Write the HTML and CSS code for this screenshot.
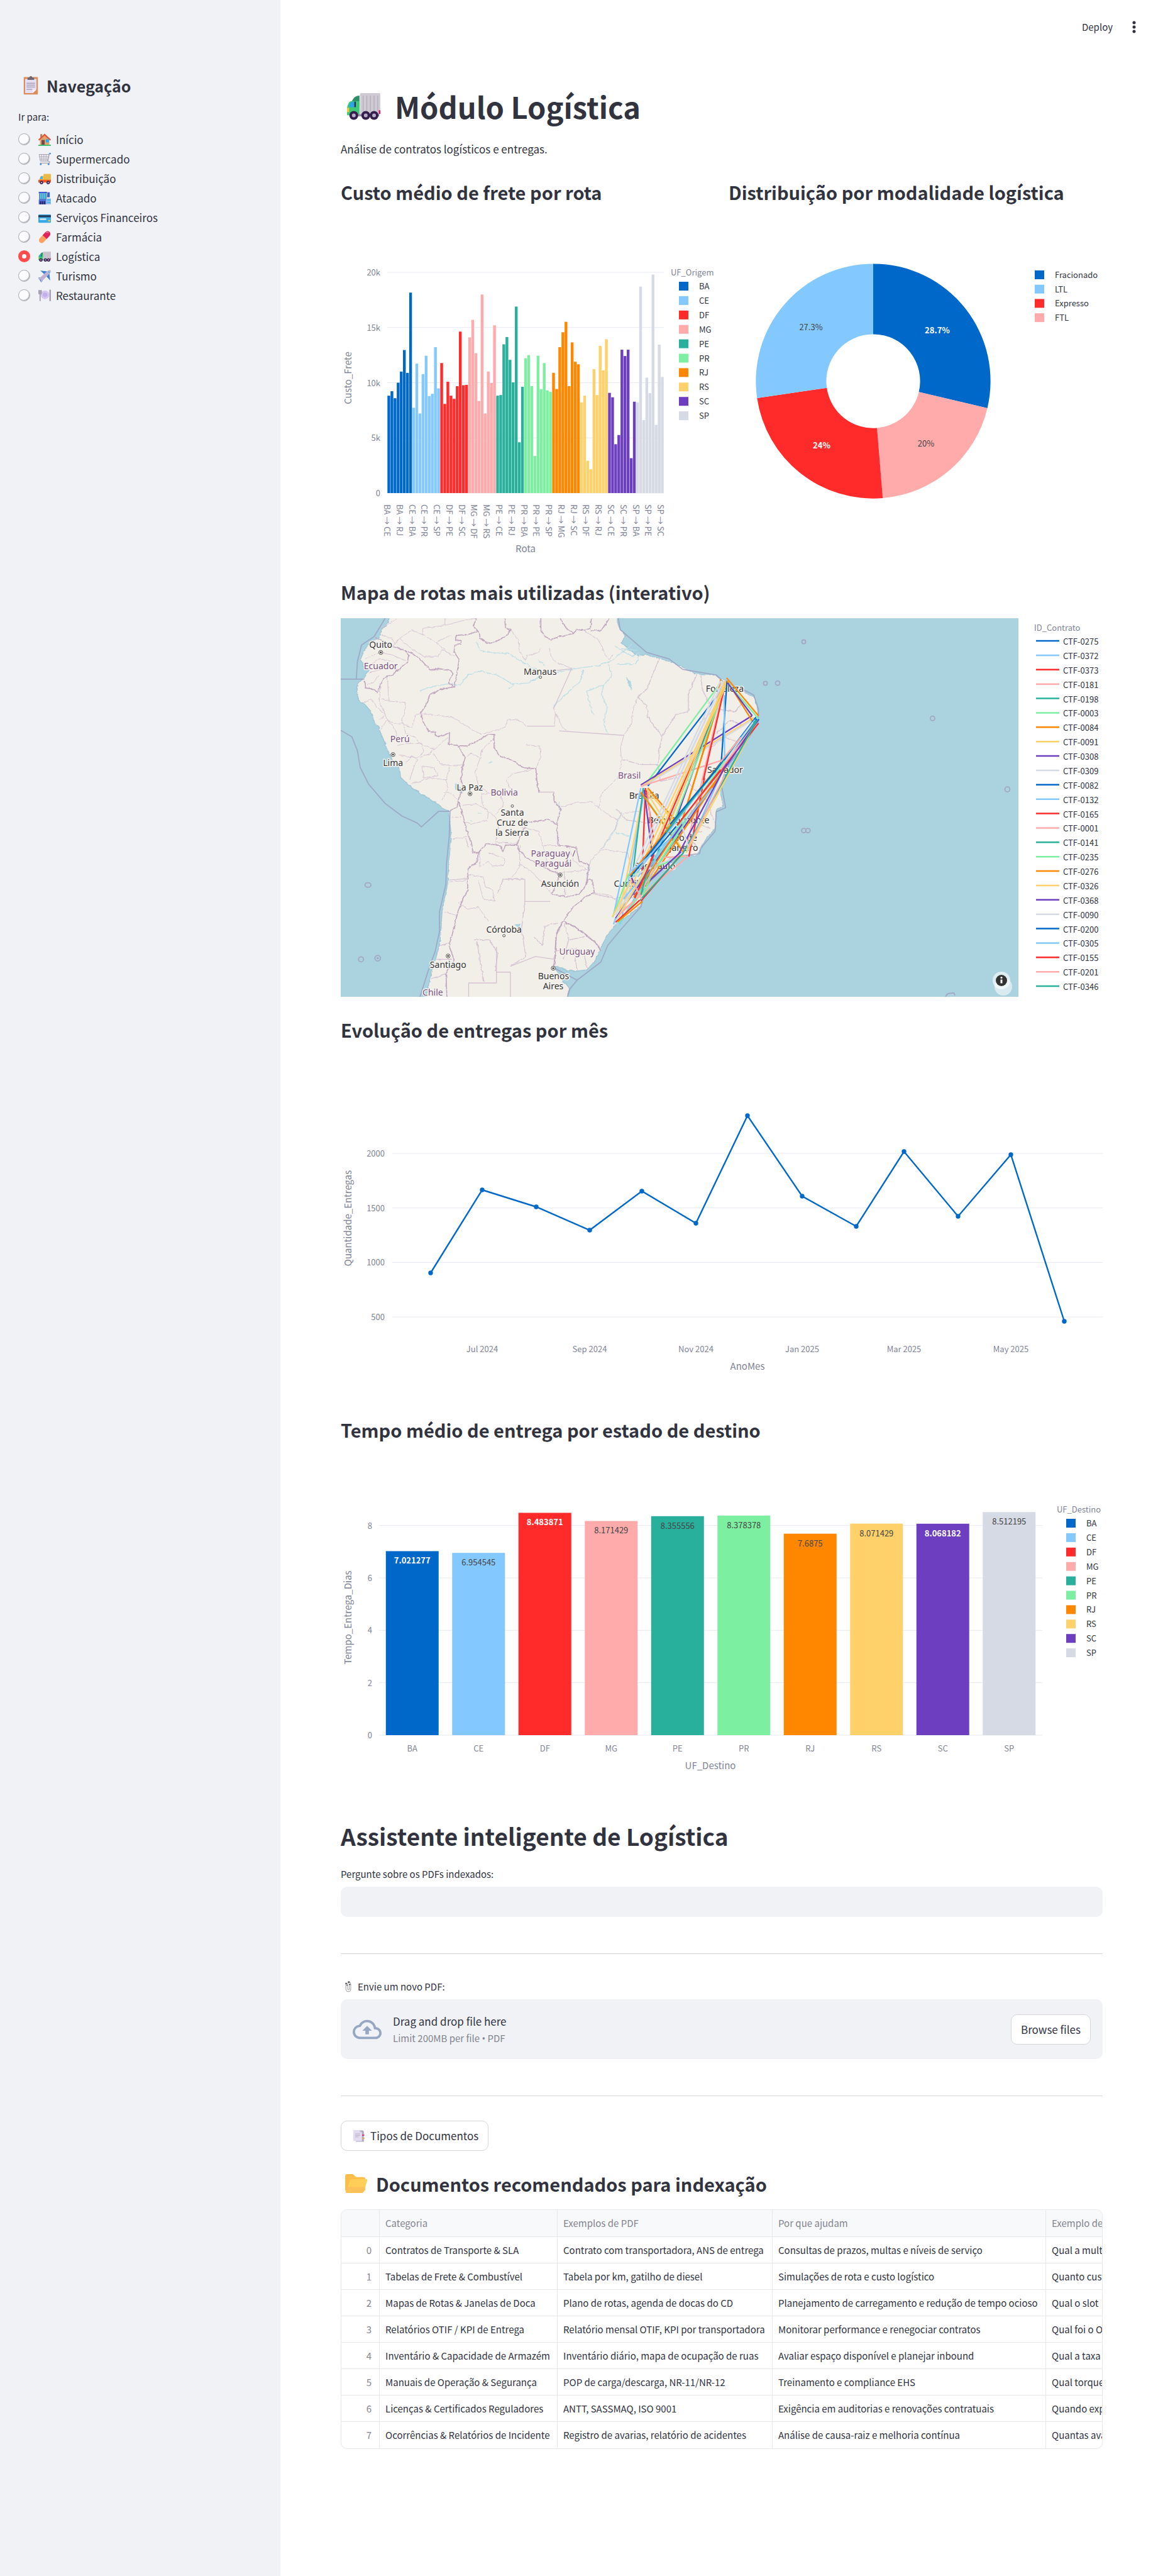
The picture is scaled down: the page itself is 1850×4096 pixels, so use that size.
FILE: index.html
```html
<!DOCTYPE html>
<html lang="pt-BR">
<head>
<meta charset="utf-8">
<title>Módulo Logística</title>
<meta name="viewport" content="width=device-width, initial-scale=1">
<link rel="stylesheet" href="styles.css">
</head>
<body>
<svg class="sprite" aria-hidden="true">
  <symbol id="i-clipboard" viewBox="0 0 32 40"><rect x="1" y="2" width="30" height="37" rx="1" fill="#d98f5c"/><path d="M4 6h24v22l-8 8H4z" fill="#e6def3"/><path d="M20 36v-7h8z" fill="#f7f3fd"/><path d="M9 8V5a2 2 0 0 1 2-2h2a3 3 0 0 1 6 0h2a2 2 0 0 1 2 2v3z" fill="#6f6777"/><path d="M7 15h18M7 19h18M7 23h18M7 28h12" stroke="#8d80a3" stroke-width="1.4"/></symbol>
  <symbol id="i-house" viewBox="0 0 32 32"><path d="M5 2h5v10H5z" fill="#b5825b"/><path d="M4 15 16 4l12 11v15H4z" fill="#dba46c"/><path d="M1 17 16 3l15 14" fill="none" stroke="#e8503a" stroke-width="3.4"/><rect x="8" y="17" width="8" height="13" fill="#7a4b45"/><rect x="19" y="15" width="8" height="8" fill="#2fa9ec"/><rect y="29" width="32" height="3" fill="#3fbf72"/></symbol>
  <symbol id="i-cart" viewBox="0 0 32 32"><path d="M27 2h5" stroke="#3f87e0" stroke-width="3"/><path d="M28 2 24 21l5 2-1 3H4" fill="none" stroke="#aaa4b5" stroke-width="2"/><path d="M2 4h25l-4 17H5z" fill="#eceaf1" stroke="#a9a3b3" stroke-width="1.6"/><path d="M8 4l1 17M14 4v17M20 4l-1 17M2 10h23M4 16h20" stroke="#a9a3b3" stroke-width="1.3"/><circle cx="6" cy="29" r="2.2" fill="#3f87e0"/><circle cx="26" cy="29" r="2.2" fill="#3f87e0"/></symbol>
  <symbol id="i-truck" viewBox="0 0 32 32"><rect x="13" y="4" width="19" height="17" rx="2" fill="#e9ba48"/><path d="M2 20 5 11q1-2 4-2h5v14H1z" fill="#fdb83b"/><path d="M4 17l2-6q1-1 3-1h2v7z" fill="#36b5ee"/><path d="M0 19h32v7H0z" fill="#f6562b"/><circle cx="8" cy="26" r="4.3" fill="#3a2450"/><circle cx="25" cy="26" r="4.3" fill="#3a2450"/><circle cx="8" cy="26" r="1.8" fill="#cbbfe0"/><circle cx="25" cy="26" r="1.8" fill="#cbbfe0"/></symbol>
  <symbol id="i-store" viewBox="0 0 32 32"><path d="M1 0h21v4H1z" fill="#3b5fd0"/><path d="M2 4h19v17H2z" fill="#5a78b0"/><path d="M5 4h3v14H5zM10 4h3v14h-3zM15 4h3v14h-3z" fill="#49dcf2"/><path d="M23 1h6v13h-7z" fill="#2f62d4"/><path d="M20 17h12v15H20z" fill="#a9bce4"/><path d="M22 18h9v5h-9zM22 25h9v4h-9z" fill="#49b8f2"/><path d="M1 20h19v12H1z" fill="#4b6ee0"/><path d="M4 24h3v8H4zM9 24h3v8H9zM14 24h3v8h-3z" fill="#2c1c50"/></symbol>
  <symbol id="i-card" viewBox="0 0 32 32"><rect y="8" width="32" height="21" rx="2" fill="#39a9e8"/><path d="M0 10h32v5H0z" fill="#263b5c"/><path d="M4 18h16v4H4z" fill="#d6e9f7"/><rect x="25" y="22" width="5" height="4" fill="#f4c63e"/></symbol>
  <symbol id="i-pill" viewBox="0 0 32 32"><g transform="rotate(-47 16 16)"><rect x="-2" y="9" width="36" height="14" rx="7" fill="#fca062"/><path d="M16 9h11a7 7 0 0 1 0 14H16z" fill="#e0245e"/><path d="M27 11q4 1 4 5" fill="none" stroke="#ff8fb0" stroke-width="2"/></g></symbol>
  <symbol id="i-lorry" viewBox="0 0 64 52"><g transform="scale(1 1.180)"><path d="M10 12q4-8 14-8v20H6z" fill="#2f8f68"/><path d="M0 36V24q2-9 7-11h17v23z" fill="#3fc877"/><path d="M4 22q1-7 6-8h4v9H4z" fill="#2aa6e6"/><path d="M14 14h3v9h-3z" fill="#20344f"/><path d="M0 24h4v7H0z" fill="#f5c93c"/><rect x="25" y="0" width="39" height="34" rx="2" fill="#cfcad4"/><path d="M31 4v26M38 4v26M45 4v26M52 4v26M59 4v26" stroke="#b4adbb" stroke-width="1.6"/><path d="M12 34h50v4H12z" fill="#9a90a6"/><path d="M61 28h3v6h-3z" fill="#e0115f"/></g><g fill="#35204d"><circle cx="13" cy="43" r="8.500"/><circle cx="36" cy="43" r="8.500"/><circle cx="52" cy="43" r="8.500"/></g><g fill="#b9acc9"><circle cx="13" cy="43" r="3.600"/><circle cx="36" cy="43" r="3.600"/><circle cx="52" cy="43" r="3.600"/></g></symbol>
  <symbol id="i-plane" viewBox="0 0 32 32"><path d="M5 2 22 4l-4 10zM30 27 28 9l-10 5z" fill="#3f80d8"/><path d="M0 20l8-1 3 9-4 4zM16 24l-3 7" fill="#3f80d8"/><path d="M31 1q2 3-2 8L11 27q-2 3-4 4l-1-6-6-2q2-3 5-4L23 3q5-3 8-2z" fill="#bdb2d2"/><path d="M25 4l4 4" stroke="#49b8f2" stroke-width="2"/></symbol>
  <symbol id="i-plate" viewBox="0 0 32 32"><circle cx="17" cy="14" r="11" fill="#d3c4f0"/><circle cx="17" cy="14" r="7" fill="#c3b0ea" stroke="#e4daf8"/><path d="M0 2v8q0 3 3 3v17h3V13q3 0 3-3V2" fill="#a9a0b4"/><path d="M28 1h4v29h-4z" fill="#a9a0b4"/></symbol>
  <symbol id="i-clips" viewBox="0 0 20 32"><path d="M3 9v12q0 9 7 9t7-9V9q0-6-4-6T8 9v12q0 4 2.500 4T13 21V11" fill="none" stroke="#8d8d92" stroke-width="1.500"/><path d="M2 5h4v4H2zM9 1h5v4H9zM12 8h4v3h-4zM5 10h3v3H5z" fill="#3e3e44"/></symbol>
  <symbol id="i-tabs" viewBox="0 0 30 32"><path d="M7 2h17q4 0 4 4v26H7z" fill="#b3a7c4"/><path d="M23 13h6v3h-6z" fill="#e0246a"/><path d="M25 21h5v3h-5z" fill="#f0b13a"/><path d="M0 1h17l6 6v23H0z" fill="#e3dcf0"/><path d="M17 1v6h6z" fill="#cabfdb"/><path d="M5 11h13M5 15h13M5 19h9" stroke="#b3a7c4" stroke-width="1.500"/></symbol>
  <symbol id="i-folder" viewBox="0 0 36 31"><path d="M0 3q0-3 3-3h9q1 0 2 1l4 4h12q3 0 3 3v19H0z" fill="#ffbd4a"/><path d="M8 11q1-3 4-3h22q3 0 2 3l-5 17q-1 3-4 3H3q-3 0-2-3z" fill="#ffcf57"/><path d="M3 31q-3 0-2-3l2-7h29l-1 7q-1 3-4 3z" fill="#ffb85c" opacity=".6"/></symbol>
  <symbol id="i-cloud" viewBox="0 0 24 24"><path fill="#97a6c3" d="M19.350 10.040A7.490 7.490 0 0 0 12 4C9.110 4 6.600 5.640 5.350 8.040A5.994 5.994 0 0 0 0 14c0 3.310 2.690 6 6 6h13c2.760 0 5-2.240 5-5 0-2.640-2.050-4.780-4.650-4.960zM19 18H6c-2.210 0-4-1.790-4-4 0-2.050 1.530-3.760 3.560-3.970l1.070-.11.500-.95A5.469 5.469 0 0 1 12 6c2.620 0 4.880 1.860 5.390 4.430l.3 1.500 1.530.11A2.980 2.980 0 0 1 22 15c0 1.650-1.350 3-3 3zM8 13h2.550v3h2.900v-3H16l-4-4z"/></symbol>
</svg>

<div class="app">
  <aside class="sidebar">
    <h2 class="sidebar-title"><svg class="icon icon-title"><use href="#i-clipboard"/></svg>Navegação</h2>
    <fieldset class="nav">
      <legend>Ir para:</legend>
      <label><input type="radio" name="page"><svg class="icon icon-nav"><use href="#i-house"/></svg>Início</label>
      <label><input type="radio" name="page"><svg class="icon icon-nav"><use href="#i-cart"/></svg>Supermercado</label>
      <label><input type="radio" name="page"><svg class="icon icon-nav"><use href="#i-truck"/></svg>Distribuição</label>
      <label><input type="radio" name="page"><svg class="icon icon-nav"><use href="#i-store"/></svg>Atacado</label>
      <label><input type="radio" name="page"><svg class="icon icon-nav"><use href="#i-card"/></svg>Serviços Financeiros</label>
      <label><input type="radio" name="page"><svg class="icon icon-nav"><use href="#i-pill"/></svg>Farmácia</label>
      <label><input type="radio" name="page" checked><svg class="icon icon-nav"><use href="#i-lorry"/></svg>Logística</label>
      <label><input type="radio" name="page"><svg class="icon icon-nav"><use href="#i-plane"/></svg>Turismo</label>
      <label><input type="radio" name="page"><svg class="icon icon-nav"><use href="#i-plate"/></svg>Restaurante</label>
    </fieldset>
  </aside>

  <div class="page">
    <header class="toolbar">
      <button type="button" class="deploy">Deploy</button>
      <button type="button" class="more" aria-label="Menu"><svg viewBox="0 0 6 20" width="6" height="20"><circle cx="3" cy="3" r="2.500"/><circle cx="3" cy="10" r="2.500"/><circle cx="3" cy="17" r="2.500"/></svg></button>
    </header>

    <main class="content">
      <h1><svg class="icon icon-lorry"><use href="#i-lorry"/></svg>Módulo Logística</h1>
      <p class="lead">Análise de contratos logísticos e entregas.</p>

      <div class="columns">
        <section>
          <h3>Custo médio de frete por rota</h3>
          <svg class="chart" id="cost-chart" viewBox="0 0 595 560" role="img" aria-label="Custo de frete por rota"></svg>
        </section>
        <section>
          <h3>Distribuição por modalidade logística</h3>
          <svg class="chart" id="mode-chart" viewBox="0 0 595 560" role="img" aria-label="Modalidade logística"></svg>
        </section>
      </div>

      <section class="map-section">
        <h3>Mapa de rotas mais utilizadas (interativo)</h3>
        <svg class="chart" id="route-map" viewBox="0 0 1212 602" role="img" aria-label="Mapa de rotas">
          <defs>
            <clipPath id="map-clip"><rect width="1078" height="602"/></clipPath>
            <filter id="rough" x="0" y="0" width="100%" height="100%"><feTurbulence type="fractalNoise" baseFrequency=".07" numOctaves="3" seed="4"/><feDisplacementMap in="SourceGraphic" scale="9" xChannelSelector="R" yChannelSelector="G"/></filter>
          </defs>
          <g clip-path="url(#map-clip)">
            <rect width="1078" height="602" fill="#aad3df"/>
            <g transform="scale(.4424) translate(-50 -174)">
              <g filter="url(#rough)">
                <path class="land" d="M235 150 225 174 210 205 195 215 188 245 155 262 145 275 130 300 122 320 130 345 150 360 135 385 112 410 108 440 115 470 135 482 155 505 168 540 185 565 195 590 210 625 225 660 238 690 262 715 265 745 300 780 350 812 395 838 415 855 437 868 445 930 447 970 438 1050 434 1130 415 1220 410 1300 405 1350 385 1420 370 1470 355 1560 865 1560 870 1500 850 1480 845 1465 815 1430 830 1425 860 1440 900 1442 935 1438 965 1405 985 1360 1010 1310 1040 1275 1067 1255 1089 1240 1129 1206 1136 1162 1147 1125 1198 1074 1234 1038 1292 1027 1328 1027 1343 1005 1365 965 1397 929 1401 864 1426 849 1416 806 1426 740 1445 697 1488 639 1539 566 1552 523 1546 486 1532 454 1488 432 1452 425 1430 396 1387 376 1328 374 1292 356 1270 345 1220 325 1180 315 1150 305 1120 310 1085 285 1060 262 1075 235 1055 215 1045 190 1045 150Z"/>
                <path class="water" d="M1000 1370 975 1385 985 1355ZM1060 1262 1035 1325 1020 1335 1040 1290 1042 1265ZM458 770 475 768 480 785 497 795 485 802 465 790ZM675 1275 697 1272 690 1290ZM1078 385 1092 402 1098 430 1086 418Z"/>
                <g transform="translate(43.600 174.200) scale(.726)">
                  <path class="river" d="M680 115 700 160 760 170 840 175 910 215 940 235 1000 262 1080 270 1140 255 1200 245 1280 235 1340 215 1400 170 1450 130M600 330 640 280 700 262 780 280 860 325 940 320 1000 285M840 350 870 325M1210 255 1195 310 1130 370 1060 440M1335 225 1350 290 1310 330 1300 380 1330 440 1310 520 1330 570M1310 330 1230 360 1240 420 1260 480M1440 320 1450 360M400 360 450 340 540 325 600 330M990 210 1020 235M1400 150 1480 160M1370 140 1450 190 1490 170M1380 230 1470 225 1490 180M1240 1230 1225 1320M1300 1140 1350 1080 1375 1030 1400 960M1090 910 1095 950M740 715 760 712M690 965 705 965M650 1000 660 1005M1370 1060 1440 1080"/>
                  <path class="state" d="M415 470 570 492 640 540 705 575 760 560 820 540 840 500 890 505 930 535M1060 440 1075 475 1065 535M1075 475 1090 500 1105 540 1135 560M930 628 995 632 1000 690 975 745M1410 580 1395 640 1400 715 1380 790 1300 870 1285 935 1330 970 1380 1000 1370 1040 1300 1140 1250 1200 1238 1225M1285 940 1260 910 1180 910 1100 935M1380 1000 1400 970 1500 950M1300 1145 1430 1160 1450 1250 1440 1340M1265 1360 1340 1370 1440 1440M855 65 890 110 895 160 925 210 930 185 985 170 1000 147M1042 147 1050 190 1080 220 1155 248M1215 60 1290 110 1310 165 1335 205 1360 180M1410 580 1450 520 1455 460 1480 390 1500 370M768 595 710 650 700 690 675 760 690 830 745 868 800 870 815 920 780 970M700 690 650 670 625 690M975 745 860 770 830 800 850 845M745 868 705 870 710 920 740 960 735 1000 660 1018 630 1010M615 925 680 920 720 940 775 985 790 1030 775 1110 880 1115M905 1035 990 1055 1010 1125 1085 1125M1010 1130 1030 1200 1095 1270M1115 1240 1120 1370M1090 1260 1200 1250 1225 1240M1060 1330 1190 1330M1140 1130 1160 1200 1238 1250M895 1120 895 1230 850 1290M895 1215 960 1260 1055 1365M695 1160 700 1230 740 1200 760 1230 820 1220 820 1190 740 1160M640 1270 715 1280 725 1330 760 1340 770 1400 715 1390 690 1300M560 985 605 985M565 1095 635 1080M545 1305 610 1300 640 1290M590 1410 640 1440 690 1430 740 1500M510 1450 580 1470M265 140 300 100 360 60 415 80 480 120 560 80M415 85 415 50 525 35 525 0M525 35 620 10 680 0M300 100 360 150 420 190 490 190 510 155 590 195M480 120 530 160M200 50 260 20 290 0M210 80 260 100 280 130M130 200 200 170 260 180 330 210M160 230 200 200 270 215M150 270 220 250M240 290 245 380 250 410 330 420 320 480 310 520 270 520 240 505 200 410 205 340M250 410 210 400M120 420 160 400 190 440 230 480 200 500M205 550 240 500 290 570 270 610M310 520 360 540 380 480 430 470M320 520 330 570 380 590 400 620 470 650 540 590M290 630 330 620 410 620 420 660 390 690 300 680M330 720 360 680 390 700 370 740 350 800M400 690 450 670 470 640M410 730 470 740 490 780 420 790ZM470 670 500 720 550 730 620 725M550 730 530 800 450 790 360 820M530 800 540 850 510 900M520 860 560 870 590 900M140 330 180 310 200 280"/>
                  <path class="nation" d="M180 95 210 110 265 140 330 160 345 180 340 215 300 250 270 275 225 295 205 330 190 365 170 350 130 345 125 310M345 165 380 185 410 210 450 255 500 250 555 260 565 275 540 320 572 340M572 340 585 270 595 205 570 165 575 130 605 125 605 110 578 110 578 85 640 80 685 65M680 0 665 40 695 70 700 100 740 125 770 120 830 85 850 60 825 45 820 0M1000 0 1000 60 1020 90 1050 105 1110 85 1165 75 1130 55 1095 0M1165 75 1175 55 1215 60 1245 50 1250 0M1245 62 1300 60 1340 0M572 340 510 350 450 380 430 430 405 470 420 520 445 560 475 565 480 585 520 580 548 565 545 625 590 630 630 632 690 605 740 575 768 575 768 640 800 685 850 700 915 740 975 745 980 800 990 860M1065 862 1065 905 1100 945 1085 990 1080 1025 1085 1125M590 630 625 690 610 740 605 800 615 830 590 905 585 935 550 952M590 905 615 980 630 1040 650 1100 665 1160 690 1160 685 1205 640 1240 635 1300 640 1345 610 1400 590 1450 575 1510 560 1570 545 1620 570 1690 530 1760 535 1880M690 1160 730 1115 800 1125 812 1155 825 1122 880 1125 910 1050 940 1010 1040 995 1080 1025M880 1125 920 1180 990 1220 1050 1250 1095 1270 1070 1330 1055 1365 1130 1380 1190 1365 1225 1320 1238 1220 1190 1205 1175 1135 1085 1125M1225 1320 1235 1290 1255 1295 1265 1360 1220 1380 1160 1430 1110 1500"/>
                </g>
                <path class="nation" d="M849 1263 885 1280 930 1310 975 1350 985 1370M849 1263 825 1310 820 1400 815 1430"/>
                <path class="state" d="M855 1270 870 1330 930 1320M870 1330 850 1400M890 1380 900 1440M925 1380 935 1430M820 1370 900 1360M1330 374 1300 450 1300 510 1255 520 1205 600 1155 530 1150 490 1118 455 1150 430 1195 320M1345 380 1350 430 1375 480M1205 600 1195 650 1190 700 1125 700 1060 680M1190 700 1200 760 1290 740 1310 780 1370 830 1390 900M1310 860 1300 900 1380 930M1340 550 1400 500 1470 510 1500 470M1400 590 1450 540 1500 560M1380 640 1430 600 1480 620M1040 860 1080 900 1160 910M1340 1000 1290 960 1350 940M960 1165 1030 1180 1110 1180M500 965 510 1000M440 1115 500 1110M410 1350 440 1340M530 1330 585 1330 615 1380 605 1440M540 1335 550 1400 565 1480M615 1160 635 1112 712 1112M712 1192 700 1290 715 1390 660 1425M780 1280 830 1270M785 1280 775 1350 745 1320M375 1470 430 1450M395 1400 450 1400"/>
              </g>
              <path class="state" d="M803 365 880 355 815 500M720 562 817 562M835 579 1067 595M712 1112 712 1192 803 1192M510 1535 510 1485 610 1485 610 1355M610 1446 660 1446 660 1535M660 1425 750 1390 820 1400M762 799 818 799"/>
              <path class="sea-line" d="M210 174 170 240 125 270 110 330 106 392M50 393 135 393M50 577 90 600 110 650 120 710 150 770 210 840 270 885 325 910 340 924 402 868 443 868 440 960 430 1060 428 1130 405 1230 405 1300 390 1370 365 1440 335 1535M1048 174 1055 215 1150 297 1230 320 1280 358 1400 378 1450 425 1500 432 1535 450 1552 500 1551 550 1500 630 1445 700 1420 780 1434 855 1400 870 1396 940 1345 1000 1340 1020 1260 1030 1150 1130 1130 1210 1060 1290 1010 1350 985 1410 900 1475 815 1430M900 1475 875 1505 865 1535"/>
              <g class="islet"><ellipse cx="148" cy="1133" rx="11" ry="8"/><circle cx="123" cy="1400" r="9"/><circle cx="183" cy="1396" r="10"/><circle cx="183" cy="1396" r="2"/><circle cx="1715" cy="259" r="7"/><circle cx="1577" cy="408" r="7"/><circle cx="1621" cy="407" r="8"/><circle cx="2178" cy="534" r="8"/><circle cx="2447" cy="789" r="9"/><circle cx="1715" cy="937" r="8"/><circle cx="1730" cy="937" r="8"/><path d="M2225 1535q5-15 20-13 12-6 13 8"/></g>
            </g>
            <g id="map-labels"></g>
            <g id="map-routes" transform="translate(411.500 77.200) scale(.3212)"></g>
            <g><circle cx="1054" cy="586" r="14" fill="#fff" opacity=".55"/><circle cx="1051" cy="576" r="14" fill="#fff" opacity=".6"/><circle cx="1051" cy="576" r="9" fill="#333"/><circle cx="1051" cy="571.500" r="1.600" fill="#fff"/><path d="M1051 574.500v6" stroke="#fff" stroke-width="3"/></g>
          </g>
        </svg>
      </section>

      <section class="chart-section">
        <h3>Evolução de entregas por mês</h3>
        <svg class="chart" id="month-chart" viewBox="0 0 1212 560" role="img" aria-label="Entregas por mês"></svg>
      </section>

      <section class="chart-section">
        <h3>Tempo médio de entrega por estado de destino</h3>
        <svg class="chart" id="time-chart" viewBox="0 0 1212 560" role="img" aria-label="Tempo médio de entrega"></svg>
      </section>

      <section class="assistant">
        <h2>Assistente inteligente de Logística</h2>
        <label class="field-label" for="question">Pergunte sobre os PDFs indexados:</label>
        <input class="question" id="question" type="text">
        <hr>
        <div class="field-label" id="upload-label"><svg class="icon icon-clips"><use href="#i-clips"/></svg>Envie um novo PDF:</div>
        <div class="dropzone" role="group" aria-labelledby="upload-label">
          <svg class="icon-cloud"><use href="#i-cloud"/></svg>
          <div class="drop-text"><span>Drag and drop file here</span><small>Limit 200MB per file <span class="bullet">•</span> PDF</small></div>
          <button type="button" class="button">Browse files</button>
        </div>
        <hr>
        <button type="button" class="button"><svg class="icon icon-tabs"><use href="#i-tabs"/></svg>Tipos de Documentos</button>
      </section>

      <section class="documents">
        <h3><svg class="icon icon-folder"><use href="#i-folder"/></svg>Documentos recomendados para indexação</h3>
        <div class="table-frame">
          <table>
            <colgroup><col class="c-index"><col class="c-category"><col class="c-example"><col class="c-help"><col class="c-ask"></colgroup>
            <thead><tr><th></th><th>Categoria</th><th>Exemplos de PDF</th><th>Por que ajudam</th><th>Exemplo de pergunta</th></tr></thead>
            <tbody>
              <tr><td>0</td><td>Contratos de Transporte &amp; SLA</td><td>Contrato com transportadora, ANS de entrega</td><td>Consultas de prazos, multas e níveis de serviço</td><td>Qual a multa</td></tr>
              <tr><td>1</td><td>Tabelas de Frete &amp; Combustível</td><td>Tabela por km, gatilho de diesel</td><td>Simulações de rota e custo logístico</td><td>Quanto custa</td></tr>
              <tr><td>2</td><td>Mapas de Rotas &amp; Janelas de Doca</td><td>Plano de rotas, agenda de docas do CD</td><td>Planejamento de carregamento e redução de tempo ocioso</td><td>Qual o slot</td></tr>
              <tr><td>3</td><td>Relatórios OTIF / KPI de Entrega</td><td>Relatório mensal OTIF, KPI por transportadora</td><td>Monitorar performance e renegociar contratos</td><td>Qual foi o OTIF</td></tr>
              <tr><td>4</td><td>Inventário &amp; Capacidade de Armazém</td><td>Inventário diário, mapa de ocupação de ruas</td><td>Avaliar espaço disponível e planejar inbound</td><td>Qual a taxa</td></tr>
              <tr><td>5</td><td>Manuais de Operação &amp; Segurança</td><td>POP de carga/descarga, NR-11/NR-12</td><td>Treinamento e compliance EHS</td><td>Qual torque</td></tr>
              <tr><td>6</td><td>Licenças &amp; Certificados Reguladores</td><td>ANTT, SASSMAQ, ISO 9001</td><td>Exigência em auditorias e renovações contratuais</td><td>Quando expira</td></tr>
              <tr><td>7</td><td>Ocorrências &amp; Relatórios de Incidente</td><td>Registro de avarias, relatório de acidentes</td><td>Análise de causa-raiz e melhoria contínua</td><td>Quantas avarias</td></tr>
            </tbody>
          </table>
        </div>
      </section>
    </main>
  </div>
</div>
<script src="charts.js"></script>
</body>
</html>
```
FILE: styles.css
```css
* { box-sizing: border-box; }

body {
  margin: 0;
  color: #31333f;
  background: #fff;
  font: 17px/26px "Noto Sans CJK SC", "Noto Sans", sans-serif;
}

button, input { font: inherit; color: inherit; }
.sprite { position: absolute; width: 0; height: 0; }
.app { display: flex; }

/* Sidebar */
.sidebar { flex: 0 0 446px; padding: 118px 29px 0; background: #f0f2f6; }
.sidebar-title { display: flex; align-items: center; gap: 13px; margin: 0; padding-left: 8px; font-size: 25px; line-height: 36px; font-weight: 700; }
.nav { margin: 0; padding: 22px 0 0; border: 0; }
.nav legend { padding: 22px 0 0; margin-bottom: -12px; font-size: 15px; line-height: 20px; }
.nav label { display: flex; align-items: center; height: 31px; }
.nav input {
  appearance: none;
  width: 19px;
  height: 19px;
  margin: 0 13px 0 0;
  border: 1px solid #a9aab1;
  border-radius: 50%;
  background: #fbfbfd;
  box-shadow: inset -1px -1px 1px #a9aab1;
}
.nav input:checked { border: 6px solid #ff4b4b; background: #fff; box-shadow: none; }
.icon { flex: none; display: inline-block; }
.icon-title { width: 24px; height: 30px; }
.icon-nav { width: 20px; height: 20px; margin-right: 8px; }

/* Page */
.page { flex: 1; min-width: 0; }
.toolbar { display: flex; justify-content: flex-end; align-items: center; gap: 31px; height: 86px; padding: 0 43px 0 0; }
.toolbar button { display: flex; align-items: center; padding: 0; border: 0; background: none; font-size: 15px; }
.more svg { fill: #31333f; }
.content { padding: 51px 96px 202px; }

h1, h2, h3, p { margin: 0; }
h1 { display: flex; align-items: center; gap: 23px; padding-left: 10px; font-size: 47px; line-height: 64px; font-weight: 700; }
h2 { font-size: 37px; line-height: 48px; font-weight: 600; }
h3 { font-size: 29px; line-height: 36px; font-weight: 600; white-space: nowrap; }
.icon-lorry { width: 53px; height: 43px; }
.lead { margin-top: 23px; }

.columns { display: grid; grid-template-columns: 1fr 1fr; gap: 22px; margin-top: 37px; }
.chart { display: block; width: 100%; height: auto; overflow: visible; }
.columns, .chart-section { padding-bottom: 40px; }
.map-section { padding-bottom: 34px; }
.map-section h3 { padding-bottom: 24px; box-sizing: content-box; }

/* Chart parts */
.chart text { font-size: 13px; fill: #808495; }
.chart .axis-title { font-size: 15px; }
.chart .legend { fill: #31333f; }
.chart .on-dark { fill: #fff; font-weight: 700; }
.chart .on-light { fill: #444; }
.chart .grid { stroke: #e6eaf1; stroke-width: 1; }
.start { text-anchor: start; }
.middle { text-anchor: middle; }
.end { text-anchor: end; }

/* Map */
.land { fill: #f2efe9; stroke: #9fc3d4; stroke-width: 3; }
.water { fill: #aad3df; }
.river { fill: none; stroke: #bcdde6; stroke-width: 4; stroke-linejoin: round; }
.state { fill: none; stroke: #d5c2d3; stroke-width: 3; stroke-linejoin: round; }
.nation { fill: none; stroke: #bfa5be; stroke-width: 5; stroke-linejoin: round; }
.sea-line { fill: none; stroke: #9a9fc0; stroke-width: 4; stroke-linejoin: round; opacity: .8; }
.islet { fill: none; stroke: #a3a6c4; stroke-width: 4; }
#map-labels text { font-family: "Noto Sans", sans-serif; font-size: 14px; fill: #333; stroke: #f6f4f0; stroke-width: 3px; paint-order: stroke; stroke-linejoin: round; }
#map-labels .country { fill: #7b5580; }
#map-labels circle { fill: #f2efe9; stroke: #555; stroke-width: 1; }
#map-labels .dot { fill: #333; stroke: none; }
#map-routes line { stroke-width: 7; }

/* Assistant */
.assistant { padding-top: 4px; }
.field-label { display: flex; align-items: center; margin-top: 27px; font-size: 15px; line-height: 20px; }
.question { display: block; width: 100%; height: 48px; margin-top: 10px; padding: 0 16px; border: 0; border-radius: 10px; background: #f0f2f6; }
hr { height: 1px; margin: 58px 0 42px; border: 0; background: #d6d6d9; }
hr + .field-label { margin-top: 0; }
.icon-clips { width: 12px; height: 18px; margin: 0 9px 0 6px; }
.dropzone { display: flex; align-items: center; gap: 18px; height: 95px; margin-top: 10px; padding: 0 19px; border-radius: 10px; background: #f0f2f6; }
.icon-cloud { width: 46px; height: 46px; }
.drop-text { flex: 1; display: flex; flex-direction: column; gap: 2px; }
.drop-text small { font-size: 15px; line-height: 24px; color: #83858e; }
.bullet { font-family: "Noto Sans", sans-serif; }
.button { display: flex; align-items: center; gap: 9px; height: 48px; padding: 0 15px; border: 1px solid #d6d6d9; border-radius: 10px; background: #fff; white-space: nowrap; }
.assistant > .button { padding-left: 19px; }
.dropzone + hr { margin-bottom: 39px; }
.icon-tabs { width: 18px; height: 20px; }

/* Documents */
.documents { padding-top: 34px; }
.documents h3 { display: flex; align-items: center; gap: 14px; padding-left: 7px; margin-bottom: 23px; }
.icon-folder { width: 35px; height: 30px; }
.table-frame { overflow: hidden; border: 1px solid #e6e8eb; border-radius: 10px; }
table { width: 1300px; table-layout: fixed; border-collapse: separate; border-spacing: 0; font-size: 15px; }
.c-index { width: 61px; }
.c-category { width: 283px; }
.c-example { width: 342px; }
.c-help { width: 435px; }
th, td { height: 42px; padding: 0 0 0 9px; border-right: 1px solid #e6e8eb; border-bottom: 1px solid #e6e8eb; text-align: left; font-weight: 400; white-space: nowrap; }
th { height: 43px; background: #f8f9fb; color: #83858e; }
td:first-child { padding: 0 12px 0 0; text-align: right; color: #83858e; }
tbody tr:last-child td { border-bottom: 0; }
```
FILE: charts.js
```js
const NS = 'http://www.w3.org/2000/svg';
const UFS = ['BA', 'CE', 'DF', 'MG', 'PE', 'PR', 'RJ', 'RS', 'SC', 'SP'];
const COLORS = ['#0068c9', '#83c9ff', '#ff2b2b', '#ffabab', '#29b09d', '#7defa1', '#ff8700', '#ffd16a', '#6d3fc0', '#d5dae5'];

function add(parent, tag, attrs, text) {
  const node = document.createElementNS(NS, tag);
  for (const key in attrs) node.setAttribute(key, attrs[key]);
  if (text !== undefined) node.textContent = text;
  parent.appendChild(node);
  return node;
}
const byId = id => document.getElementById(id);

/* y is the middle of the text's capitals */
const label = (svg, x, y, cls, text) => add(svg, 'text', { x, y: y + 5, class: cls }, text);
const turned = (svg, x, y, angle, cls, text) =>
  add(svg, 'text', { x: 0, y: 5, class: cls, transform: `translate(${x} ${y}) rotate(${angle})` }, text);

function swatches(svg, x, textX, y, pitch, names) {
  names.forEach((name, i) => {
    add(svg, 'rect', { x, y: y + i * pitch - 7, width: 15, height: 14, fill: COLORS[i] });
    label(svg, textX, y + i * pitch, 'legend', name);
  });
}

/* Freight cost per route; 696 units of height are 20k */
(function () {
  const svg = byId('cost-chart');
  const left = 74, width = 440, top = 110, bottom = 461;
  const heights = [
    [307, 321, 299, 348, 383, 451, 379, 632],
    [269, 408, 251, 375, 433, 306, 313, 460, 330],
    [410, 281, 351, 307, 297, 337, 509, 340, 341],
    [491, 546, 441, 290, 626, 251, 383, 347, 529],
    [307, 309, 469, 492, 420, 349, 588, 160, 335],
    [425, 435, 337, 117, 433, 328, 410, 324, 319],
    [379, 328, 460, 507, 540, 337, 475, 414, 406],
    [286, 307, 102, 75, 391, 309, 464, 387, 485],
    [316, 302, 154, 183, 452, 432, 452, 110, 288],
    [286, 651, 230, 364, 315, 689, 215, 468, 366]
  ];
  ['20k', '15k', '10k', '5k', '0'].forEach((t, i) => {
    const y = top + i * (bottom - top) / 4;
    add(svg, 'line', { x1: left, x2: left + width, y1: y, y2: y, class: 'grid' });
    label(svg, left - 11, y, 'end', t);
  });
  const pitch = width / 89;
  let n = 0;
  heights.forEach((group, g) => group.forEach(h => {
    const real = h * (bottom - top) / 696;
    add(svg, 'rect', { x: left + n * pitch + .3, y: bottom - real, width: 4.400, height: real, fill: COLORS[g] });
    n++;
  }));
  ['BA→CE', 'BA→RJ', 'CE→BA', 'CE→PR', 'CE→SP', 'DF→PE', 'DF→SC', 'MG→DF', 'MG→RS', 'PE→CE', 'PE→RJ', 'PR→BA',
    'PR→PE', 'PR→SP', 'RJ→MG', 'RJ→SC', 'RS→DF', 'RS→RJ', 'SC→CE', 'SC→PR', 'SP→BA', 'SP→PE', 'SP→SC'].forEach((t, i) =>
    turned(svg, left + i * 4 * pitch, 479, 90, 'start', t.replace('→', ' → ')));
  label(svg, 294, 550, 'axis-title middle', 'Rota');
  turned(svg, 12, 278, -90, 'axis-title middle', 'Custo_Frete');
  label(svg, 525, 110, 'start', 'UF_Origem');
  swatches(svg, 538, 570, 132, 22.9, UFS);
})();

/* Share of each delivery mode, clockwise from the top */
(function () {
  const svg = byId('mode-chart');
  const cx = 230, cy = 283, R = 186.600, r = 74.600;
  const slices = [[28.700, 0], [20, 3], [24, 2], [27.300, 1]];
  const at = (radius, share) => {
    const a = share / 100 * 2 * Math.PI;
    return `${(cx + radius * Math.sin(a)).toFixed(1)} ${(cy - radius * Math.cos(a)).toFixed(1)}`;
  };
  let from = 0;
  slices.forEach(([share, color]) => {
    const to = from + share;
    add(svg, 'path', { d: `M${at(R, from)}A${R} ${R} 0 0 1 ${at(R, to)}L${at(r, to)}A${r} ${r} 0 0 0 ${at(r, from)}Z`, fill: COLORS[color] });
    from = to;
  });
  label(svg, 332, 202, 'middle on-dark', '28.7%');
  label(svg, 314, 382, 'middle on-light', '20%');
  label(svg, 148, 385, 'middle on-dark', '24%');
  label(svg, 131, 197, 'middle on-light', '27.3%');
  swatches(svg, 487, 519, 114, 22.700, ['Fracionado', 'LTL', 'Expresso', 'FTL']);
})();

/* Map labels, routes and contract list */
(function () {
  const g = byId('map-labels');
  const px = x => (x - 50) * .4424, py = y => (y - 174) * .4424;
  [['Quito', 194, 270], ['Manaus', 767, 366], ['Lima', 238, 693], ['La Paz', 514, 782], ['Santa', 667, 873], ['Cruz de', 667, 909],
    ['la Sierra', 667, 945], ['Asunción', 839, 1129], ['Córdoba', 637, 1294], ['Santiago', 436, 1419], ['Buenos', 815, 1461],
    ['Aires', 814, 1496], ['Fortaleza', 1431, 427], ['Salvador', 1432, 719], ['Brasília', 1141, 812], ['Belo Horizonte', 1265, 899],
    ['Rio de', 1285, 963], ['Janeiro', 1283, 998], ['São Paulo', 1180, 1064], ['Curitiba', 1091, 1129]
  ].forEach(([t, x, y]) => label(g, px(x), py(y), 'middle', t));
  [['Ecuador', 194, 346], ['Perú', 263, 607], ['Bolivia', 638, 801], ['Brasil', 1088, 738], ['Paraguay /', 814, 1020],
    ['Paraguái', 814, 1056], ['Uruguay', 900, 1372], ['Chile', 381, 1519]
  ].forEach(([t, x, y]) => label(g, px(x), py(y), 'middle country', t));
  [[194, 297], [238, 664], [515, 805], [839, 1097], [436, 1388], [814, 1432]].forEach(([x, y]) => {
    add(g, 'circle', { cx: px(x), cy: py(y), r: 3.200 });
    add(g, 'circle', { cx: px(x), cy: py(y), r: 1.400, class: 'dot' });
  });
  [[768, 386], [667, 849], [637, 1315]].forEach(([x, y]) => add(g, 'circle', { cx: px(x), cy: py(y), r: 2 }));

  const routes = byId('map-routes');
  [[1, 205, 600, 70, 1230], [7, 222, 605, 95, 1235], [1, 225, 600, 110, 1250], [2, 228, 600, 210, 1060], [4, 217, 600, 162, 1050],
    [2, 232, 610, 268, 850], [3, 238, 610, 262, 880], [8, 222, 610, 262, 940], [7, 232, 605, 380, 780], [6, 240, 600, 375, 760],
    [7, 240, 630, 415, 910], [5, 230, 650, 405, 900], [6, 205, 620, 415, 918], [5, 600, 80, 230, 580], [0, 625, 90, 240, 590],
    [8, 205, 585, 755, 243], [7, 215, 588, 765, 252], [9, 230, 585, 770, 256], [3, 205, 592, 600, 465], [6, 600, 62, 580, 190],
    [9, 600, 70, 150, 1040], [9, 610, 75, 80, 1230], [9, 620, 75, 270, 900], [9, 615, 70, 130, 1120], [6, 622, 75, 375, 870],
    [6, 600, 130, 430, 700], [8, 600, 130, 385, 740], [5, 622, 100, 355, 800], [4, 625, 80, 205, 1130], [3, 618, 90, 430, 900],
    [2, 622, 90, 515, 560], [2, 520, 550, 443, 940], [2, 628, 80, 175, 1145], [7, 628, 75, 90, 1235], [7, 635, 75, 265, 900],
    [7, 622, 70, 320, 850], [0, 632, 70, 604, 465], [1, 618, 140, 620, 455], [1, 630, 470, 430, 920], [6, 630, 55, 788, 243],
    [6, 632, 70, 763, 278], [5, 640, 85, 788, 258], [8, 635, 80, 757, 243], [1, 775, 255, 610, 470], [6, 605, 470, 150, 1035],
    [0, 775, 250, 260, 920], [0, 780, 258, 155, 1040], [1, 770, 262, 170, 1040], [4, 775, 265, 330, 820], [0, 790, 260, 350, 780],
    [7, 780, 270, 430, 920], [2, 788, 280, 385, 785], [3, 785, 265, 410, 760], [9, 760, 275, 120, 1170], [8, 785, 265, 290, 980],
    [4, 780, 265, 410, 930], [6, 625, 500, 200, 1060], [6, 610, 520, 230, 1090], [8, 630, 480, 390, 930], [5, 620, 465, 270, 960],
    [3, 600, 470, 700, 350], [1, 560, 600, 190, 1040], [1, 410, 790, 120, 1150], [1, 400, 810, 160, 1010], [0, 380, 790, 255, 940],
    [2, 600, 510, 385, 785], [3, 620, 540, 435, 900], [8, 410, 780, 80, 1245], [9, 410, 790, 440, 890], [5, 430, 760, 210, 1100],
    [3, 440, 938, 110, 1210], [5, 430, 935, 165, 1030], [9, 415, 925, 175, 1030], [3, 430, 938, 310, 945], [8, 405, 915, 170, 1130],
    [7, 410, 930, 220, 1130], [2, 400, 935, 205, 1160], [4, 415, 922, 202, 1155], [5, 390, 830, 95, 1270], [4, 270, 950, 80, 1255],
    [9, 260, 960, 75, 1265], [1, 280, 960, 100, 1275], [6, 360, 850, 170, 1140], [5, 280, 980, 215, 1130], [3, 290, 970, 180, 1160],
    [4, 240, 1000, 205, 1130], [2, 270, 930, 175, 1145], [7, 250, 960, 95, 1240], [5, 145, 1025, 65, 1240], [7, 160, 1050, 65, 1238],
    [3, 155, 1045, 210, 1150], [8, 160, 1045, 170, 1070], [3, 205, 1130, 95, 1230], [5, 185, 1150, 95, 1270], [2, 200, 1155, 80, 1265],
    [6, 212, 1162, 90, 1262], [1, 80, 1245, 70, 1275]
  ].forEach(([c, x1, y1, x2, y2]) => add(routes, 'line', { x1, y1, x2, y2, stroke: COLORS[c] }));

  const svg = byId('route-map');
  label(svg, 1103, 15, 'start', 'ID_Contrato');
  ['0275', '0372', '0373', '0181', '0198', '0003', '0084', '0091', '0308', '0309', '0082', '0132', '0165', '0001', '0141',
    '0235', '0276', '0326', '0368', '0090', '0200', '0305', '0155', '0201', '0346'].forEach((id, i) => {
    const y = 36 + i * 22.880;
    add(svg, 'line', { x1: 1106, x2: 1143, y1: y, y2: y, stroke: COLORS[i % 10], 'stroke-width': 2.500 });
    label(svg, 1149, y + 1, 'legend', 'CTF-' + id);
  });
})();

/* Deliveries per month */
(function () {
  const svg = byId('month-chart');
  ['2000', '1500', '1000', '500'].forEach((t, i) => {
    const y = 179 + i * 86.700;
    add(svg, 'line', { x1: 82, x2: 1212, y1: y, y2: y, class: 'grid' });
    label(svg, 70, y, 'end', t);
  });
  const points = [[143, 369], [225, 237], [311, 264], [396, 301], [479, 239], [565, 290], [647, 119], [734, 247], [820, 295],
    [896, 176], [982, 279], [1066, 181], [1151, 446]];
  add(svg, 'polyline', { points: points.join(' '), fill: 'none', stroke: COLORS[0], 'stroke-width': 2.400 });
  points.forEach(([cx, cy]) => add(svg, 'circle', { cx, cy, r: 3.700, fill: COLORS[0] }));
  ['Jul 2024', 'Sep 2024', 'Nov 2024', 'Jan 2025', 'Mar 2025', 'May 2025'].forEach((t, i) =>
    label(svg, points[i * 2 + 1][0], 490, 'middle', t));
  label(svg, 647, 518, 'axis-title middle', 'AnoMes');
  turned(svg, 12, 282, -90, 'axis-title middle', 'Quantidade_Entregas');
})();

/* Mean delivery time per state */
(function () {
  const svg = byId('time-chart');
  const zero = 468, unit = 41.670, left = 61, pitch = 105.500;
  [8, 6, 4, 2, 0].forEach(v => {
    const y = zero - v * unit;
    add(svg, 'line', { x1: left, x2: left + 10 * pitch, y1: y, y2: y, class: 'grid' });
    label(svg, 50, y, 'end', v);
  });
  const dark = [0, 2, 8];
  [7.021277, 6.954545, 8.483871, 8.171429, 8.355556, 8.378378, 7.6875, 8.071429, 8.068182, 8.512195].forEach((v, i) => {
    const mid = left + (i + .5) * pitch, top = zero - v * unit;
    add(svg, 'rect', { x: mid - 42, y: top, width: 84, height: v * unit, fill: COLORS[i] });
    label(svg, mid, top + 15, 'middle ' + (dark.includes(i) ? 'on-dark' : 'on-light'), v);
    label(svg, mid, 489, 'middle', UFS[i]);
  });
  label(svg, 588, 517, 'axis-title middle', 'UF_Destino');
  turned(svg, 12, 281, -90, 'axis-title middle', 'Tempo_Entrega_Dias');
  label(svg, 1139, 109, 'start', 'UF_Destino');
  swatches(svg, 1154, 1186, 131, 22.900, UFS);
})();
```
